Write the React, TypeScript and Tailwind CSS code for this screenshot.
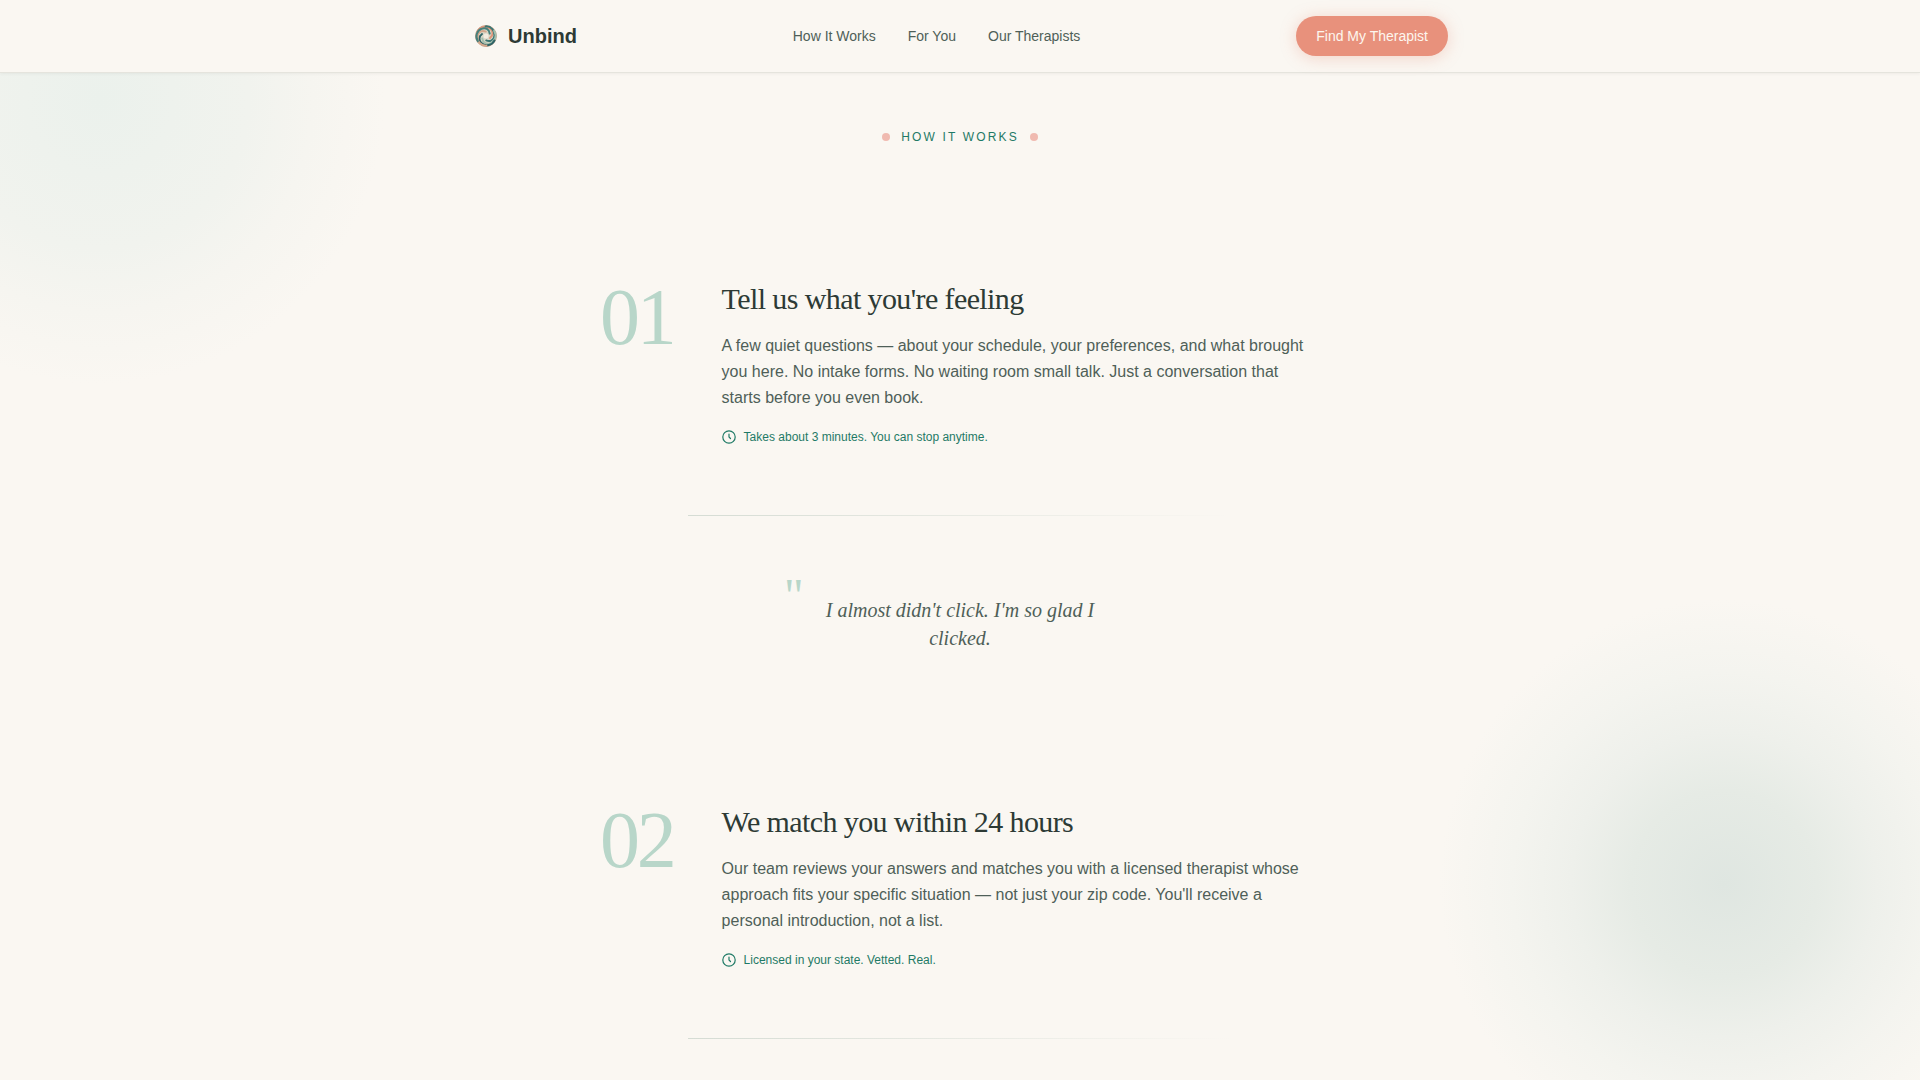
const links = ["How It Works", "For You", "Our Therapists"]

const steps = [
  {
    number: "01",
    title: "Tell us what you're feeling",
    text: "A few quiet questions — about your schedule, your preferences, and what brought you here. No intake forms. No waiting room small talk. Just a conversation that starts before you even book.",
    note: "Takes about 3 minutes. You can stop anytime.",
  },
  {
    number: "02",
    title: "We match you within 24 hours",
    text: "Our team reviews your answers and matches you with a licensed therapist whose approach fits your specific situation — not just your zip code. You'll receive a personal introduction, not a list.",
    note: "Licensed in your state. Vetted. Real.",
  },
]

const swirl = ["#dd9478", "#3b7673", "#a3bfae", "#2f6466", "#d3a78c", "#47807b"]

function Logo() {
  return (
    <svg viewBox="0 0 28 28" className="w-7 h-7" aria-hidden="true">
      <circle cx="14" cy="14" r="10.5" fill="#d9d6c6" stroke="#d3a890" strokeWidth="1" />
      {swirl.map((color, i) => (
        <path
          key={i}
          d="M5.5 9.500C8 4.500 14 3.500 18 6.500C21.500 9 21.500 13.500 18 16"
          fill="none"
          stroke={color}
          strokeWidth="2"
          strokeLinecap="round"
          transform={`rotate(${i * 60} 14 14)`}
        />
      ))}
      <circle cx="14" cy="14" r="2.5" fill="#f3ece0" />
    </svg>
  )
}

function ClockIcon() {
  return (
    <svg viewBox="0 0 14 14" className="w-3.5 h-3.5 shrink-0" fill="none" stroke="currentColor" strokeWidth="1.2" strokeLinecap="round" aria-hidden="true">
      <circle cx="7" cy="7" r="6.2" />
      <path d="M7 4v3l1.500 1.500" />
    </svg>
  )
}

function Header() {
  return (
    <header className="sticky top-0 z-10 bg-[#faf7f2] border-b border-[#e5e4dd] shadow-[0_1px_3px_rgba(45,58,53,0.06)]">
      <div className="max-w-5xl h-18 mx-auto px-6 flex items-center justify-between">
        <a href="#" className="flex items-center gap-2 text-xl font-bold text-[#2d3a35]">
          <Logo />
          Unbind
        </a>
        <nav className="flex gap-8">
          {links.map((link) => (
            <a key={link} href="#" className="text-sm text-[#4f5f58] hover:text-[#1f7a66] transition">
              {link}
            </a>
          ))}
        </nav>
        <button className="h-10 px-5 rounded-full bg-[#e8917c] text-sm text-[#fdf6ee] shadow-[0_2px_16px_rgba(232,145,124,0.35)] hover:bg-[#df826b] transition">
          Find My Therapist
        </button>
      </div>
    </header>
  )
}

function Step({ number, title, text, note }: (typeof steps)[number]) {
  return (
    <article className="pt-16 pb-17 flex items-start gap-12">
      <span className="font-['Liberation_Serif',serif] text-[80px] leading-[72px] tracking-[-0.04em] text-[#b8d6c9]">{number}</span>
      <div className="flex-1">
        <h2 className="mb-4 font-['Liberation_Serif',serif] text-3xl tracking-[-0.02em] text-[#2d3a35]">{title}</h2>
        <p className="text-base leading-[26px] text-[#4f5f58]">{text}</p>
        <p className="mt-4 flex items-center gap-2 text-xs leading-5 text-[#1f7a66]">
          <ClockIcon />
          {note}
        </p>
      </div>
    </article>
  )
}

function Divider() {
  return <hr className="mx-22 h-px border-0 bg-linear-to-r from-[#d5dcd4] to-transparent" />
}

export default function App() {
  return (
    <div className="relative min-h-screen overflow-clip bg-[#faf7f2] font-['Liberation_Sans',sans-serif]">
      <div className="absolute -top-50 -left-50 w-150 h-150 bg-[radial-gradient(circle,#ebf1ec_0%,#f1f3ee_35%,#f6f5f0_50%,#faf7f2_67%)]" />
      <div className="fixed -right-26 -bottom-26 w-150 h-150 bg-[radial-gradient(circle,#dfe6e1_0%,#e6ebe5_22%,#eef0eb_36%,#f4f4ef_50%,#faf7f2_67%)]" />
      <Header />
      <main className="relative max-w-3xl mx-auto px-6 pt-14">
        <div className="flex items-center justify-center gap-[11px]">
          <span className="w-2 h-2 rounded-full bg-[#f0bab0]" />
          <h1 className="text-xs tracking-[0.18em] text-[#1f7a66]">HOW IT WORKS</h1>
          <span className="w-2 h-2 rounded-full bg-[#f0bab0]" />
        </div>
        <div className="pt-18">
          <Step {...steps[0]} />
          <Divider />
          <blockquote className="relative w-88 mx-auto px-8 pt-20 pb-22 text-center font-['Liberation_Serif',serif] italic text-xl text-[#4f5f58]">
            <span className="absolute left-0 top-14 text-5xl leading-none not-italic text-[#b8d6c9]">"</span>
            I almost didn't click. I'm so glad I clicked.
          </blockquote>
          <Step {...steps[1]} />
          <Divider />
        </div>
      </main>
    </div>
  )
}
